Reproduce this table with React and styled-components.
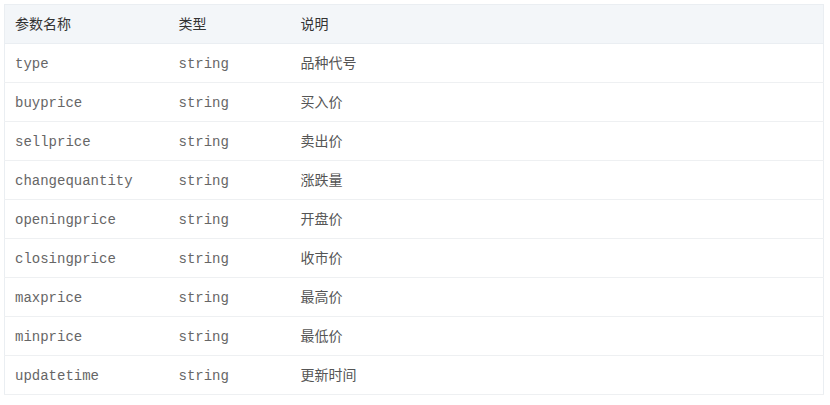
import React from "react"
import styled, { createGlobalStyle } from "styled-components"

const GlobalStyle = createGlobalStyle`
    body {
        margin: 0;
        background: #fff;
        font-family: "Liberation Sans", "Noto Sans CJK SC", sans-serif;
    }
`

const rows = [
    ["type", "string", "品种代号"],
    ["buyprice", "string", "买入价"],
    ["sellprice", "string", "卖出价"],
    ["changequantity", "string", "涨跌量"],
    ["openingprice", "string", "开盘价"],
    ["closingprice", "string", "收市价"],
    ["maxprice", "string", "最高价"],
    ["minprice", "string", "最低价"],
    ["updatetime", "string", "更新时间"],
]

function App() {
    return (
        <>
            <GlobalStyle />
            <Wrap>
                <Table>
                    <colgroup>
                        <col style={{ width: 164 }} />
                        <col style={{ width: 122 }} />
                        <col />
                    </colgroup>
                    <thead>
                        <tr>
                            <Th>参数名称</Th>
                            <Th>类型</Th>
                            <Th>说明</Th>
                        </tr>
                    </thead>
                    <tbody>
                        {rows.map(([name, type, desc]) => (
                            <tr key={name}>
                                <Td $code>{name}</Td>
                                <Td $code>{type}</Td>
                                <Td>{desc}</Td>
                            </tr>
                        ))}
                    </tbody>
                </Table>
            </Wrap>
        </>
    )
}

export default App

const Wrap = styled.div`
    padding: 4px 6px 4px 4px;
`

const Table = styled.table`
    width: 820px;
    border-collapse: collapse;
    table-layout: fixed;
    border: 1px solid #eaeef2;
`

const Th = styled.th`
    height: 36px;
    padding: 0 10px 2px;
    text-align: left;
    font-weight: 400;
    font-size: 14px;
    color: #333;
    background: #f3f6f9;
    border-bottom: 1px solid #eaeef2;
    font-family: "Noto Sans CJK SC", sans-serif;
`

const Td = styled.td`
    height: 36px;
    padding: ${p => (p.$code ? "2px 10px 0" : "0 10px 2px")};
    font-size: 14px;
    color: ${p => (p.$code ? "#666" : "#555")};
    border-bottom: 1px solid #eef0f2;
    font-family: ${p => (p.$code ? '"Liberation Mono", "Courier New", monospace' : '"Noto Sans CJK SC", sans-serif')};
`
